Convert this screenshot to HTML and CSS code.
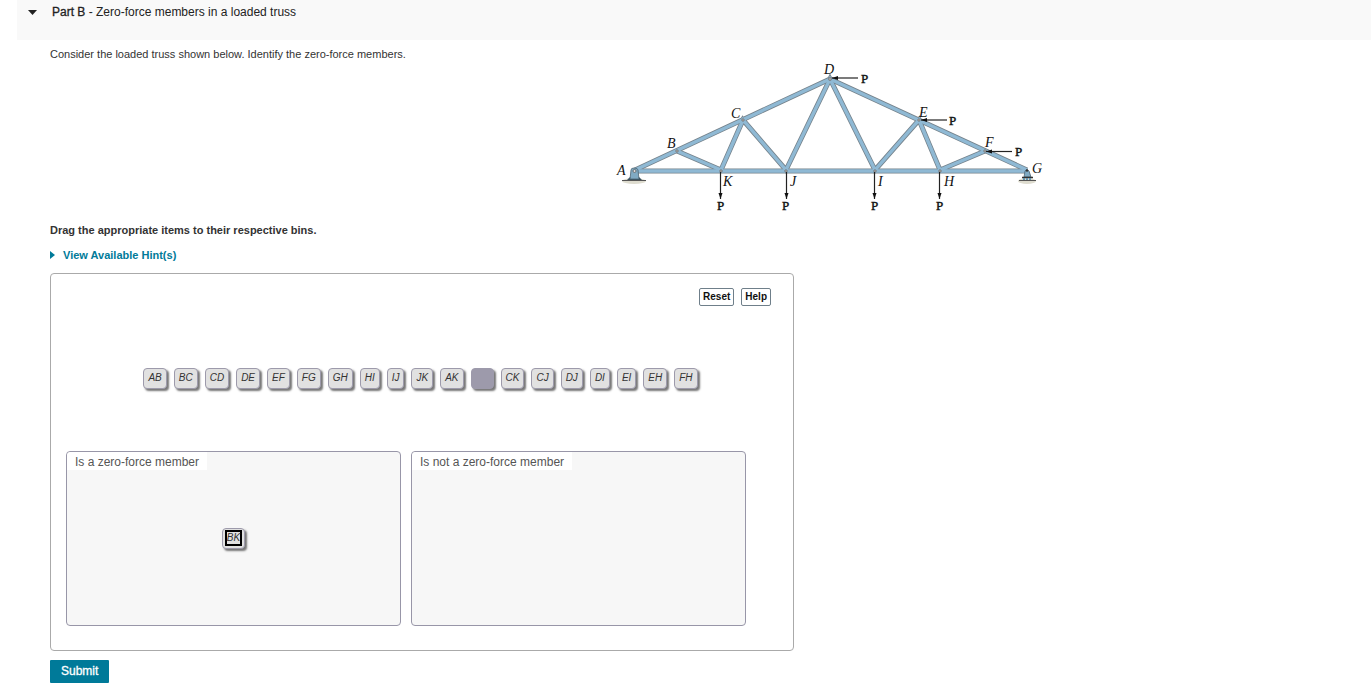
FILE: index.html
```html
<!DOCTYPE html>
<html lang="en">
<head>
<meta charset="utf-8">
<title>Part B - Zero-force members in a loaded truss</title>
<link rel="stylesheet" href="styles.css">
</head>
<body>
<header class="part-header">
  <svg class="caret" width="9" height="5" viewBox="0 0 9 5" aria-hidden="true"><path d="M0 0h9L4.500 5z" fill="#222"/></svg>
  <h1 class="part-title"><span class="part-name">Part B</span> - Zero-force members in a loaded truss</h1>
</header>
<main class="content">
  <p class="prompt">Consider the loaded truss shown below. Identify the zero-force members.</p>
  <figure class="figure">
    <svg width="436" height="155" viewBox="610 60 436 155" role="img" aria-label="Loaded truss">
      <defs>
        <marker id="arrow" markerUnits="userSpaceOnUse" markerWidth="8" markerHeight="6" refX="6" refY="2" orient="auto"><path d="M0 0L6 2L0 4z" fill="#111"/></marker>
        <g id="members">
          <path d="M721 170L677 151M721 170L743 120L786 170L830 79L875 170L919 120L940 170L985 151"/>
          <path d="M635 170L830 79L1027 170"/>
          <path d="M635 171H1027"/>
        </g>
      </defs>
      <ellipse cx="634" cy="181" rx="12" ry="3" fill="#dedccf"/>
      <ellipse cx="1027" cy="181" rx="9" ry="3" fill="#dedccf"/>
      <use href="#members" fill="none" stroke="#76838c" stroke-width="5"/>
      <use href="#members" fill="none" stroke="#8fb9d4" stroke-width="3.400"/>
      <path d="M622 180.500H646" stroke="#555" stroke-width="1"/>
      <path d="M627 180L630 177H639L642 180z" fill="#38505f"/>
      <path d="M630 179L631 170Q631 168 634 168Q638 168 638 170L639 179z" fill="#80aac3" stroke="#4c6472" stroke-width=".8"/>
      <circle cx="634.500" cy="171" r="1.500" fill="#ddd" stroke="#555" stroke-width=".7"/>
      <path d="M1024 177L1025 171Q1027 168 1029 171L1031 177z" fill="#80aac3" stroke="#4c6472" stroke-width=".8"/>
      <path d="M1022 177.500H1033" stroke="#333" stroke-width="1.500"/>
      <path d="M1023 179H1032" stroke="#6595b0" stroke-width="2" stroke-dasharray="2 1"/>
      <path d="M1019 180.500H1036" stroke="#555"/>
      <circle cx="1027" cy="170.500" r="1.200" fill="#333"/>
      <g fill="#aaa" stroke="#666" stroke-width=".6">
        <circle cx="677" cy="151" r="1.300"/><circle cx="743" cy="120" r="1.300"/><circle cx="830" cy="79" r="1.500"/><circle cx="919" cy="120" r="1.300"/><circle cx="985" cy="151" r="1.300"/>
        <circle cx="721" cy="171" r="1.300"/><circle cx="786" cy="171" r="1.300"/><circle cx="875" cy="171" r="1.300"/><circle cx="940" cy="171" r="1.300"/>
      </g>
      <g stroke="#222" stroke-width="1.200">
        <path d="M720.500 172V199" marker-end="url(#arrow)"/><path d="M786.500 172V199" marker-end="url(#arrow)"/><path d="M874.500 172V199" marker-end="url(#arrow)"/><path d="M939.500 172V199" marker-end="url(#arrow)"/>
        <path d="M858 78H832" marker-end="url(#arrow)"/><path d="M947 120H921" marker-end="url(#arrow)"/><path d="M1012 151.500H986" marker-end="url(#arrow)"/>
      </g>
      <g class="joint">
        <text x="617" y="175">A</text><text x="667" y="148">B</text><text x="731" y="118">C</text><text x="824" y="74">D</text><text x="919" y="117">E</text><text x="985" y="147">F</text><text x="1032" y="173">G</text>
        <text x="723" y="186">K</text><text x="790" y="186">J</text><text x="878" y="186">I</text><text x="944" y="186">H</text>
      </g>
      <g class="load">
        <text x="717" y="210">P</text><text x="782" y="210">P</text><text x="871" y="210">P</text><text x="936" y="210">P</text>
        <text x="861" y="83">P</text><text x="949" y="125">P</text><text x="1015" y="156">P</text>
      </g>
    </svg>
  </figure>
  <p class="instruction">Drag the appropriate items to their respective bins.</p>
  <a class="hints" href="#hints"><svg width="6" height="8" viewBox="0 0 6 8" aria-hidden="true"><path d="M0 0L5 4L0 8z" fill="#007a99"/></svg>View Available Hint(s)</a>
  <section class="panel">
    <div class="tools"><button class="tool" type="button">Reset</button><button class="tool" type="button">Help</button></div>
    <div class="tiles">
      <button class="tile" type="button">AB</button><button class="tile" type="button">BC</button><button class="tile" type="button">CD</button><button class="tile" type="button">DE</button><button class="tile" type="button">EF</button><button class="tile" type="button">FG</button><button class="tile" type="button">GH</button><button class="tile" type="button">HI</button><button class="tile" type="button">IJ</button><button class="tile" type="button">JK</button><button class="tile" type="button">AK</button><span class="tile tile-empty"></span><button class="tile" type="button">CK</button><button class="tile" type="button">CJ</button><button class="tile" type="button">DJ</button><button class="tile" type="button">DI</button><button class="tile" type="button">EI</button><button class="tile" type="button">EH</button><button class="tile" type="button">FH</button>
    </div>
    <div class="bins">
      <section class="bin">
        <h2 class="bin-label">Is a zero-force member</h2>
        <div class="bin-body"><button class="tile tile-placed" type="button"><span class="focus">BK</span></button></div>
      </section>
      <section class="bin">
        <h2 class="bin-label">Is not a zero-force member</h2>
      </section>
    </div>
  </section>
  <button class="submit" type="button">Submit</button>
</main>
</body>
</html>
```
FILE: styles.css
```css
* { box-sizing: border-box; }
body {
  margin: 0;
  background: #fff;
  color: #333;
  font: 11px/14px "Liberation Sans", Arial, sans-serif;
}
button { font-family: inherit; }
.part-header {
  display: flex;
  align-items: flex-start;
  gap: 15px;
  height: 40px;
  margin-left: 17px;
  padding: 4px 11px;
  background: #f9f9f9;
}
.caret { margin-top: 6px; }
.part-title {
  margin: 0;
  font-size: 12px;
  font-weight: 400;
  line-height: 16px;
  color: #222;
}
.part-name { -webkit-text-stroke: 0.3px #222; }
.content {
  display: flex;
  flex-direction: column;
  align-items: flex-start;
  padding: 7px 0 8px 50px;
}
.prompt { margin: 0; }
.figure { margin: -1px 0 8px 560px; }
.figure svg { display: block; }
.joint, .load {
  font: 14px "Liberation Serif", "Times New Roman", serif;
  fill: #111;
}
.joint { font-style: italic; }
.load {
  font-size: 13px;
  stroke: #111;
  stroke-width: 0.4px;
}
.instruction {
  margin: 0;
  font-weight: 700;
}
.hints {
  display: flex;
  align-items: center;
  gap: 7px;
  margin: 11px 0;
  color: #007a99;
  font-weight: 700;
  text-decoration: none;
}
.panel {
  width: 744px;
  max-width: 100%;
  padding: 14px 15px 24px;
  border: 1px solid #aaa;
  border-radius: 4px;
}
.tools {
  display: flex;
  justify-content: flex-end;
  gap: 7px;
  padding-right: 7px;
}
.tool {
  height: 18px;
  padding: 0 3px 1px;
  border: 1px solid #6f7f8a;
  border-radius: 2px;
  background: #fff;
  color: #111;
  font-size: 10px;
  font-weight: 700;
}
.tiles {
  display: flex;
  justify-content: center;
  gap: 7px;
  margin: 62px 3px 62px 0;
}
.tile {
  height: 21px;
  padding: 0 4px 2px;
  border: 1px solid #9d9aab;
  border-radius: 4px;
  background: #e1e1e1;
  box-shadow: 2px 2px 2px #777;
  color: #333;
  font-size: 10px;
  font-style: italic;
  line-height: 12px;
}
.tile-empty {
  width: 23px;
  background: #9d9aab;
}
.bins {
  display: grid;
  grid-template-columns: 1fr 1fr;
  gap: 10px;
  padding-right: 32px;
}
.bin {
  display: flex;
  flex-direction: column;
  align-items: flex-start;
  min-height: 175px;
  border: 1px solid #9896a8;
  border-radius: 4px;
  background: #f7f7f7;
}
.bin-label {
  margin: 0;
  padding: 2px 8px 0;
  border-radius: 4px 0 0;
  background: #fff;
  color: #555;
  font-size: 12px;
  font-weight: 400;
  line-height: 16px;
}
.bin-body {
  display: flex;
  flex: 1;
  align-items: center;
  align-self: stretch;
  justify-content: center;
  padding-bottom: 18px;
}
.tile-placed { padding: 0 2px 2px; }
.focus {
  display: block;
  border: 2px solid #000;
}
.submit {
  height: 23px;
  margin-top: 9px;
  padding: 0 11px 1px;
  border: 0;
  border-radius: 1px;
  background: #007a99;
  color: #fff;
  font-size: 12px;
  -webkit-text-stroke: 0.3px #fff;
}
```
